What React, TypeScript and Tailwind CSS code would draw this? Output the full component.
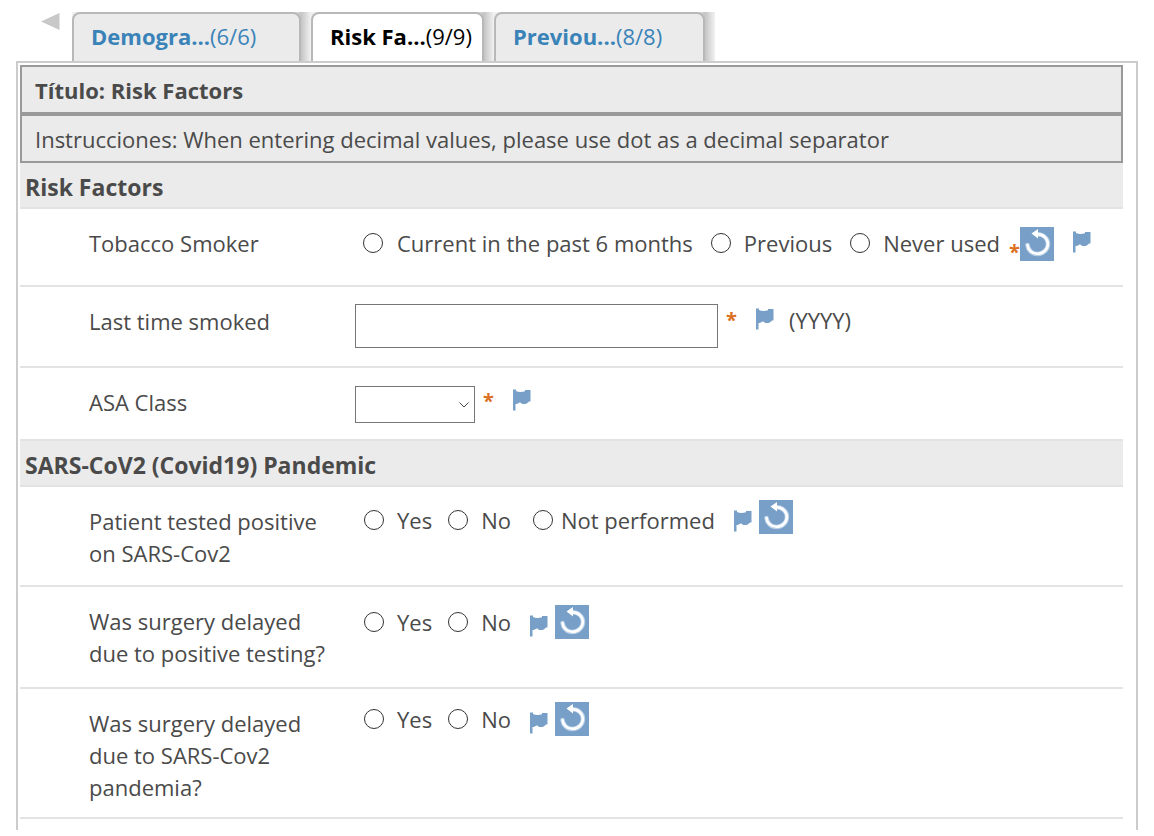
import type { ReactNode } from 'react';

interface TabProps {
  name: string;
  count: string;
  active?: boolean;
  className: string;
}

const Tab = ({ name, count, active, className }: TabProps) => (
  <div className="bg-[linear-gradient(to_left,#f2f2f2,#c4c4c4_10px,#d8d8d8_14px,#f0f0f0_22px)] pr-[10px]">
    <button
      type="button"
      role="tab"
      aria-selected={!!active}
      className={`h-[49px] whitespace-nowrap rounded-t-lg border-2 border-b-0 border-[#b8b8b8] pb-[3px] pl-[17px] text-left ${active ? 'bg-white text-black' : 'bg-[#ebebeb] text-[#3a83b8]'} ${className}`}
    >
      <b>{name}</b>
      {count}
    </button>
  </div>
);

const Flag = () => (
  <button type="button" aria-label="Flag" className="shrink-0">
    <svg width="20" height="22" viewBox="0 0 20 22" className="block">
      <path d="M1 .5h3v1.500c2.500 1.200 6 1.200 9 .2V1h5.500v11.500h-1.500c-1 .8-2 2.500-4 2.500h-2.500c-1-.2-1.500-1.500-2.500-1.500-1.500 0-1.500 1.500-4.500 1.500V21.500H1z" fill="#789fc8" />
    </svg>
  </button>
);

const Reset = () => (
  <button type="button" aria-label="Reset" className="h-[34px] w-[34px] shrink-0 bg-[#789fc8]">
    <svg width="34" height="34" viewBox="0 0 34 34" className="block">
      <path d="M17.500 7.200C24 7.200 28 12 28 17s-4.500 10-10.500 10C12 27 8 23 7.500 18" fill="none" stroke="#b9d0e8" strokeWidth="4.500" strokeLinecap="round" />
      <path d="M16 7.200C23.500 6.700 27.800 12 27.800 17s-4.300 9.800-10.300 9.800C12 26.800 8 23 7.500 18" fill="none" stroke="#fff" strokeWidth="2.600" strokeLinecap="round" />
      <path d="M11.500 6.500 18 2v9.500z" fill="#fff" />
    </svg>
  </button>
);

// flag sits a little lower than the reset button next to it
const FlagAndReset = () => (
  <div className="flex items-center gap-[6px] pl-[18px]">
    <span className="flex pt-2"><Flag /></span>
    <Reset />
  </div>
);

const Required = () => <span className="text-xl leading-5 font-bold text-[#dc7023]">*</span>;

interface RadioProps {
  name: string;
  label: string;
  className?: string;
}

const Radio = ({ name, label, className = 'gap-[13px]' }: RadioProps) => (
  <label className={`flex items-center whitespace-nowrap ${className}`}>
    <input type="radio" name={name} className="h-5 w-5 shrink-0 appearance-none rounded-full border border-[#333] bg-white checked:border-[6px]" />
    {label}
  </label>
);

const Section = ({ children }: { children: ReactNode }) => (
  <h2 className="h-[46px] border-b-2 border-[#e3e3e3] bg-[#ebebeb] pt-2 pl-[5px] text-[23px] font-bold">{children}</h2>
);

interface RowProps {
  label: ReactNode;
  className: string;
  children: ReactNode;
}

const Row = ({ label, className, children }: RowProps) => (
  <div className={`flex items-start border-b-2 border-[#e3e3e3] pl-[69px] ${className}`}>
    <div className="w-[266px] shrink-0 pt-[18px] pr-[22px]">{label}</div>
    {children}
  </div>
);

export default function App() {
  return (
    <div className="bg-white pt-3 font-['Open_Sans','Noto_Sans',sans-serif] text-[22px] leading-8 text-[#4a4a4a]">
      <div className="flex">
        <button type="button" aria-label="Previous tabs" className="h-[18px] w-[72px] pl-[41px]">
          <svg width="19" height="17" viewBox="0 0 19 17"><path d="M0 8.500 18.500 0v17z" fill="#c8c8c8" /></svg>
        </button>
        <div role="tablist" className="flex">
          <Tab name="Demogra..." count="(6/6)" className="w-[229px]" />
          <Tab name="Risk Fa..." count="(9/9)" className="w-[173px]" active />
          <Tab name="Previou..." count="(8/8)" className="w-[211px]" />
        </div>
      </div>

      <main className="mx-4 border-2 border-b-0 border-[#ccc] pt-[2px] pr-[13px] pb-[11px] pl-[2px]">
        <h1 className="border-2 border-[#999] bg-[#ebebeb] pt-2 pb-[6px] pl-[13px] font-bold leading-[31px]">Título: Risk Factors</h1>
        <p className="border-2 border-[#999] bg-[#ebebeb] pt-2 pb-[6px] pl-[13px] leading-[31px]">
          Instrucciones: When entering decimal values, please use dot as a decimal separator
        </p>

        <Section>Risk Factors</Section>
        <Row label="Tobacco Smoker" className="h-[78px]">
          <div className="flex items-center pt-[17px] pl-2">
            <div className="flex gap-[18px] pb-[2px]">
              <Radio name="smoker" label="Current in the past 6 months" className="gap-[14px]" />
              <Radio name="smoker" label="Previous" />
              <Radio name="smoker" label="Never used" />
            </div>
            <div className="flex items-center pl-[9px]">
              <span className="flex pt-4"><Required /></span>
              <Reset />
            </div>
            <div className="flex pb-1 pl-[18px]"><Flag /></div>
          </div>
        </Row>
        <Row label={<label htmlFor="last-smoked">Last time smoked</label>} className="h-[81px]">
          <div className="flex pt-[17px]">
            <input id="last-smoked" type="text" className="h-11 w-[363px] border border-[#767676] px-2" />
            <div className="flex items-start gap-[18px] pt-1 pl-2">
              <span className="flex pt-[2px]"><Required /></span>
              <Flag />
            </div>
            <span className="pl-[14px]">(YYYY)</span>
          </div>
        </Row>
        <Row label={<label htmlFor="asa-class">ASA Class</label>} className="h-[73px]">
          <div className="flex pt-[18px]">
            <div className="relative flex">
              <select id="asa-class" className="h-[37px] w-[120px] appearance-none border border-[#767676] bg-white px-2">
                <option></option>
                <option>I</option>
                <option>II</option>
                <option>III</option>
                <option>IV</option>
              </select>
              <svg width="10" height="6" viewBox="0 0 10 6" className="pointer-events-none absolute top-4 right-[6px]"><path d="M.5.5 5 5 9.500.5" fill="none" stroke="#444" /></svg>
            </div>
            <div className="flex items-start gap-[18px] pt-[3px] pl-2">
              <span className="flex pt-[2px]"><Required /></span>
              <Flag />
            </div>
          </div>
        </Row>

        <Section>SARS-CoV2 (Covid19) Pandemic</Section>
        <Row label="Patient tested positive on SARS-Cov2" className="h-[100px]">
          <div className="flex items-start pt-[13px] pl-[9px]">
            <div className="flex pt-1">
              <Radio name="tested" label="Yes" className="gap-[13px] pr-4" />
              <Radio name="tested" label="No" className="gap-[13px] pr-[22px]" />
              <Radio name="tested" label="Not performed" className="gap-2" />
            </div>
            <FlagAndReset />
          </div>
        </Row>
        <Row label="Was surgery delayed due to positive testing?" className="h-[102px]">
          <div className="flex items-center pt-[18px] pl-[9px]">
            <Radio name="delayed-test" label="Yes" className="gap-[13px] pr-4" />
            <Radio name="delayed-test" label="No" />
            <FlagAndReset />
          </div>
        </Row>
        <Row label="Was surgery delayed due to SARS-Cov2 pandemia?" className="h-[130px]">
          <div className="flex items-center pt-[13px] pl-[9px]">
            <Radio name="delayed-pandemic" label="Yes" className="gap-[13px] pr-4" />
            <Radio name="delayed-pandemic" label="No" />
            <FlagAndReset />
          </div>
        </Row>
      </main>
    </div>
  );
}
